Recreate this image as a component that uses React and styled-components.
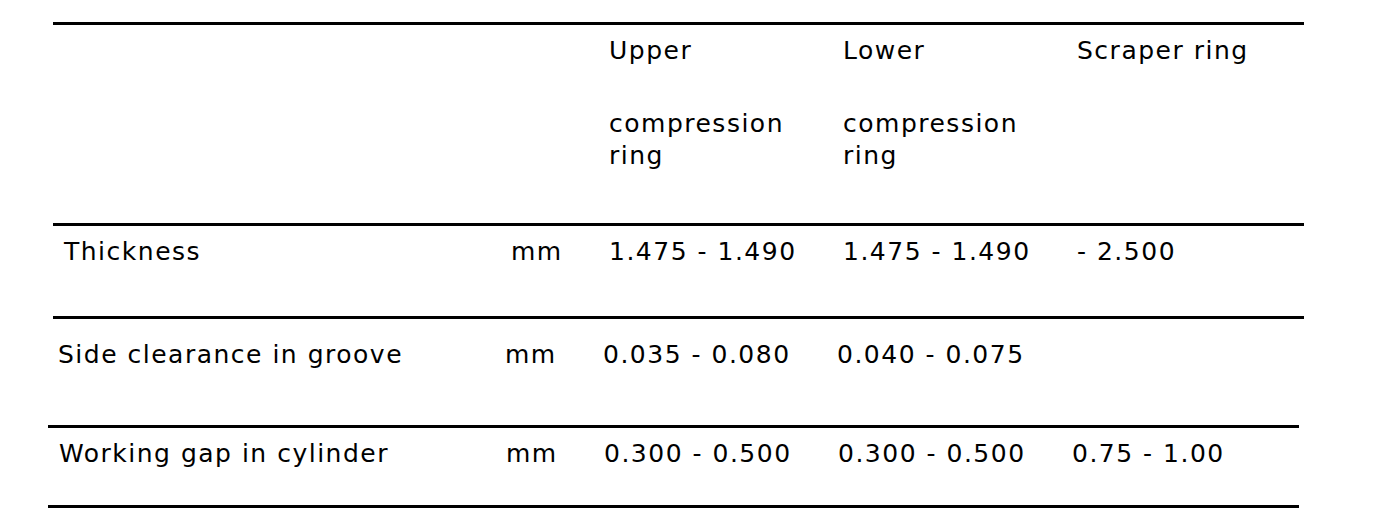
import React from "react"
import styled, {createGlobalStyle} from "styled-components";

const GlobalStyle = createGlobalStyle`
  body {
    margin: 0;
    background: #FFFFFF;
    color: #000000;
    font-family: "DejaVu Sans", Verdana, sans-serif;
  }
`;

const Page = styled.div`
  width: 1376px;
  height: 526px;
  padding-top: 22px;
  box-sizing: border-box;
  overflow: hidden;
`;

const Block = styled.div`
  width: 1251px;
  margin-left: ${props => props.left}px;
  border-top: ${props => props.topLine ? "3px solid #000000" : "none"};
`;

const Row = styled.div`
  display: grid;
  grid-template-columns: 447px 98px 234px 234px 1fr;
  box-sizing: border-box;
  height: ${props => props.height}px;
  padding-top: ${props => props.padTop}px;
  padding-left: ${props => props.padLeft || 11}px;
  border-bottom: 3px solid #000000;
`;

const Cell = styled.div`
  font-size: 25px;
  line-height: 32px;
  letter-spacing: 1.5px;
  white-space: nowrap;
`;

const HeadLine = styled.div`
  margin-bottom: ${props => props.gap || 0}px;
`;

const rows = [
    {label: "Side clearance in groove", values: ["0.035 - 0.080", "0.040 - 0.075", ""], height: 109, padTop: 20, padLeft: 10},
    {label: "Working gap in cylinder", values: ["0.300 - 0.500", "0.300 - 0.500", "0.75 - 1.00"], height: 80, padTop: 10, padLeft: 11},
];

const HeadCell = ({first, second}) => (
    <Cell>
        <HeadLine gap={41}>{first}</HeadLine>
        {second && second.map(line => <HeadLine key={line}>{line}</HeadLine>)}
    </Cell>
);

export default function App() {
    return (
        <Page>
            <GlobalStyle/>
            <Block left={53} topLine>
                <Row height={201} padTop={10}>
                    <Cell/>
                    <Cell/>
                    <HeadCell first="Upper" second={["compression", "ring"]}/>
                    <HeadCell first="Lower" second={["compression", "ring"]}/>
                    <HeadCell first="Scraper ring"/>
                </Row>
                <Row height={93} padTop={10}>
                    <Cell>Thickness</Cell>
                    <Cell>mm</Cell>
                    <Cell>1.475 - 1.490</Cell>
                    <Cell>1.475 - 1.490</Cell>
                    <Cell>- 2.500</Cell>
                </Row>
            </Block>
            <Block left={48}>
                {rows.map(row => (
                    <Row key={row.label} height={row.height} padTop={row.padTop} padLeft={row.padLeft}>
                        <Cell>{row.label}</Cell>
                        <Cell>mm</Cell>
                        {row.values.map((v, i) => <Cell key={i}>{v}</Cell>)}
                    </Row>
                ))}
            </Block>
        </Page>
    );
}
